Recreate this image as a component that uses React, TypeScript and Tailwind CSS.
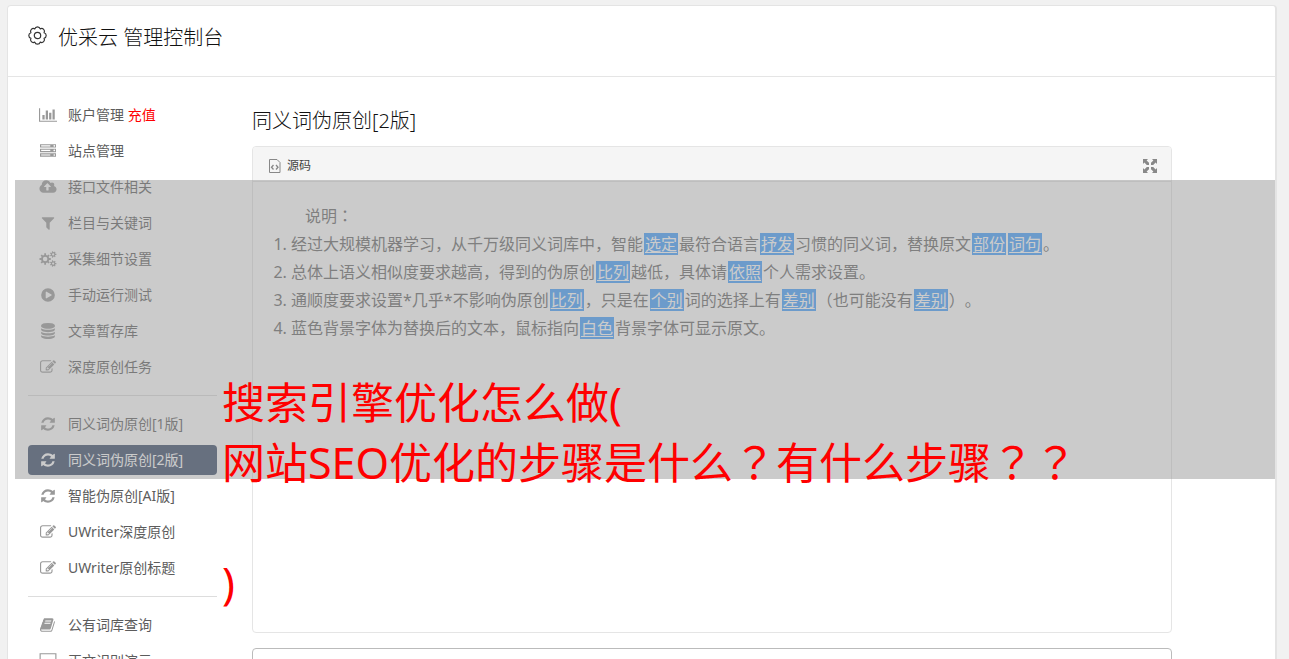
import type { ReactNode } from "react";

function gear(cx: number, cy: number, r: number, teeth: number, depth: number, hole: number): string {
  const step = (Math.PI * 2) / teeth;
  const pt = (radius: number, angle: number) =>
    `${(cx + radius * Math.cos(angle)).toFixed(1)} ${(cy + radius * Math.sin(angle)).toFixed(1)}`;
  let d = "";
  for (let i = 0; i < teeth; i++) {
    const a = i * step;
    d += `${i === 0 ? "M" : "L"}${pt(r - depth, a - step * 0.28)}L${pt(r, a - step * 0.2)}L${pt(r, a + step * 0.2)}L${pt(r - depth, a + step * 0.28)}`;
  }
  return `${d}ZM${cx - hole} ${cy}a${hole} ${hole} 0 1 0 ${hole * 2} 0a${hole} ${hole} 0 1 0 ${-hole * 2} 0Z`;
}

function scallop(cx: number, cy: number, r: number, bumps: number): string {
  const step = (Math.PI * 2) / bumps;
  const valley = r - 1.8;
  const pt = (radius: number, angle: number) =>
    `${(cx + radius * Math.cos(angle)).toFixed(2)} ${(cy + radius * Math.sin(angle)).toFixed(2)}`;
  let d = `M${pt(valley, -Math.PI / 2 - step / 2)}`;
  for (let i = 0; i < bumps; i++) {
    const a = -Math.PI / 2 + i * step;
    d += `C${pt(r + 0.7, a - step * 0.26)} ${pt(r + 0.7, a + step * 0.26)} ${pt(valley, a + step / 2)}`;
  }
  return `${d}Z`;
}

type Glyph = { box: string; width: number; d: string };

const glyphs: Record<string, Glyph> = {
  chart: {
    box: "0 0 2048 1792",
    width: 18,
    d: "M640 896v512h-256v-512h256zm384-512v1024h-256v-1024h256zm1024 1152v128h-2048v-1536h128v1408h1920zm-640-896v768h-256v-768h256zm384-384v1152h-256v-1152h256z",
  },
  server: {
    box: "0 0 1792 1792",
    width: 16,
    d: "M128 1408h1024v-128h-1024v128zm0-512h1024v-128h-1024v128zm1568 448q0-40-28-68t-68-28-68 28-28 68 28 68 68 28 68-28 28-68zm-1568-960h1024v-128h-1024v128zm1568 448q0-40-28-68t-68-28-68 28-28 68 28 68 68 28 68-28 28-68zm0-512q0-40-28-68t-68-28-68 28-28 68 28 68 68 28 68-28 28-68zm96 832v384h-1792v-384h1792zm0-512v384h-1792v-384h1792zm0-512v384h-1792v-384h1792z",
  },
  cloud: {
    box: "-64 0 1920 1792",
    width: 18,
    d: "M1216 864q0-14-9-23l-352-352q-9-9-23-9t-23 9l-351 351q-10 12-10 24 0 14 9 23t23 9h224v352q0 13 9.5 22.5t22.5 9.5h192q13 0 22.5-9.5t9.5-22.5v-352h224q13 0 22.5-9.5t9.5-22.5zm640 288q0 159-112.5 271.5t-271.5 112.5h-1088q-185 0-316.5-131.5t-131.5-316.5q0-130 70-240t188-165q-2-30-2-43 0-212 150-362t362-150q156 0 285.5 87t188.5 231q71-62 166-62 106 0 181 75t75 181q0 76-41 138 130 31 213.5 135.5t83.5 238.5z",
  },
  filter: {
    box: "0 0 1792 1792",
    width: 16,
    d: "M1595 295q17 41-14 70l-493 493v742q0 42-39 59-13 5-25 5-27 0-45-19l-256-256q-19-19-19-45v-486l-493-493q-31-29-14-70 17-39 59-39h1280q42 0 59 39z",
  },
  cogs: {
    box: "0 0 1920 1792",
    width: 18,
    d: gear(640, 896, 640, 8, 180, 250) + gear(1536, 384, 370, 7, 110, 125) + gear(1536, 1408, 370, 7, 110, 125),
  },
  play: {
    box: "0 0 1792 1792",
    width: 16,
    d: "M1312 896q0-37-32-55l-544-320q-31-19-64-1-32 19-32 56v640q0 37 32 56 16 8 32 8 17 0 32-9l544-320q32-18 32-55zM128 896a768 768 0 1 0 1536 0a768 768 0 1 0-1536 0z",
  },
  database: {
    box: "0 0 1792 1792",
    width: 16,
    d: "M896 768q237 0 443-43t325-127v170q0 69-103 128t-280 93.5-385 34.5-385-34.5-280-93.5-103-128v-170q119 84 325 127t443 43zm0 768q237 0 443-43t325-127v170q0 69-103 128t-280 93.5-385 34.5-385-34.5-280-93.5-103-128v-170q119 84 325 127t443 43zm0-384q237 0 443-43t325-127v170q0 69-103 128t-280 93.5-385 34.5-385-34.5-280-93.5-103-128v-170q119 84 325 127t443 43zm0-1152q208 0 385 34.5t280 93.5 103 128v128q0 69-103 128t-280 93.5-385 34.5-385-34.5-280-93.5-103-128v-128q0-69 103-128t280-93.5 385-34.5z",
  },
  edit: {
    box: "0 0 1792 1792",
    width: 16,
    d: "M888 1184l116-116-152-152-116 116v56h96v96h56zm440-720q-16-16-33 1l-350 350q-17 17-1 33t33-1l350-350q17-17 1-33zm80 594v190q0 119-84.5 203.5t-203.5 84.5h-832q-119 0-203.5-84.5t-84.5-203.5v-832q0-119 84.5-203.5t203.5-84.5h832q63 0 117 25 15 7 18 23 3 17-9 29l-49 49q-14 14-32 8-23-6-45-6h-832q-66 0-113 47t-47 113v832q0 66 47 113t113 47h832q66 0 113-47t47-113v-126q0-13 9-22l64-64q15-15 35-7t20 29zm-96-738l288 288-672 672h-288v-288zm444 132l-92 92-288-288 92-92q28-28 68-28t68 28l152 152q28 28 28 68t-28 68z",
  },
  refresh: {
    box: "0 0 1792 1792",
    width: 16,
    d: "M1639 1056q0 5-1 7-64 268-268 434.5t-478 166.5q-146 0-282.5-55t-243.5-157l-129 129q-19 19-45 19t-45-19-19-45v-448q0-26 19-45t45-19h448q26 0 45 19t19 45-19 45l-137 137q71 66 161 102t187 36q134 0 250-65t186-179q11-17 53-117 8-23 30-23h192q13 0 22.5 9.5t9.5 22.5zm25-800v448q0 26-19 45t-45 19h-448q-26 0-45-19t-19-45 19-45l138-138q-148-137-349-137-134 0-250 65t-186 179q-11 17-53 117-8 23-30 23h-199q-13 0-22.5-9.5t-9.5-22.5v-7q65-268 270-434.5t480-166.5q146 0 284 55.5t245 156.5l130-129q19-19 45-19t45 19 19 45z",
  },
  book: {
    box: "0 0 1792 1792",
    width: 16,
    d: "M1639 478q40 57 18 129l-275 906q-19 64-76.5 107.5t-122.5 43.5h-923q-77 0-148.5-53.5t-99.5-131.5q-24-67-2-127 0-4 3-27t4-37q1-8-3-21.5t-3-19.5q2-11 8-21t16.5-23.5 16.5-23.5q23-38 45-91.5t30-91.5q3-10 .5-30t-.5-28q3-11 17-28t17-23q21-36 42-92t25-90q1-9-2.5-32t.5-28q4-13 22-30.5t22-22.5q19-26 42.5-84.5t27.5-96.5q1-8-3-25.5t-2-26.5q2-8 9-18t18-23 17-21q8-12 16.5-30.5t15-35 16-36 19.5-32 26.5-23.5 36-11.5 47.5 5.5l-1 3q38-9 51-9h761q74 0 114 56t18 130l-274 906q-36 119-71.5 153.5t-128.5 34.5h-869q-27 0-38 15-11 16-1 43 24 70 144 70h923q29 0 56-15.5t35-41.5l300-987q7-22 5-57 38 15 59 43zm-1064 2q-4 13 2 22.5t20 9.5h608q13 0 25.5-9.5t16.5-22.5l21-64q4-13-2-22.5t-20-9.5h-608q-13 0-25.5 9.5t-16.5 22.5zm-83 256q-4 13 2 22.5t20 9.5h608q13 0 25.5-9.5t16.5-22.5l21-64q4-13-2-22.5t-20-9.5h-608q-13 0-25.5 9.5t-16.5 22.5z",
  },
  laptop: {
    box: "0 0 2048 1792",
    width: 18,
    d: "M64 0h1920v1280h-1920zM192 128v1024h1664v-1024zM0 1408h2048v128h-2048z",
  },
};

function Icon({ name }: { name: string }) {
  const g = glyphs[name];
  return (
    <svg width={g.width} height={16} viewBox={g.box} fill="currentColor" fillRule="evenodd" aria-hidden="true">
      <path d={g.d} />
    </svg>
  );
}

type Item = { icon: string; label: string; extra?: string; active?: boolean };

const groups: Item[][] = [
  [
    { icon: "chart", label: "账户管理", extra: "充值" },
    { icon: "server", label: "站点管理" },
    { icon: "cloud", label: "接口文件相关" },
    { icon: "filter", label: "栏目与关键词" },
    { icon: "cogs", label: "采集细节设置" },
    { icon: "play", label: "手动运行测试" },
    { icon: "database", label: "文章暂存库" },
    { icon: "edit", label: "深度原创任务" },
  ],
  [
    { icon: "refresh", label: "同义词伪原创[1版]" },
    { icon: "refresh", label: "同义词伪原创[2版]", active: true },
    { icon: "refresh", label: "智能伪原创[AI版]" },
    { icon: "edit", label: "UWriter深度原创" },
    { icon: "edit", label: "UWriter原创标题" },
  ],
  [
    { icon: "book", label: "公有词库查询" },
    { icon: "laptop", label: "正文识别演示" },
  ],
];

function MenuItem({ item }: { item: Item }) {
  return (
    <li>
      <a
        href="#"
        className={
          item.active
            ? "flex h-[30px] items-center rounded bg-[#374967] text-sm text-white"
            : "flex h-[30px] items-center rounded text-sm text-[#5c5c5c]"
        }
      >
        <span className={item.active ? "flex w-10 justify-center" : "flex w-10 justify-center text-[#999]"}>
          <Icon name={item.icon} />
        </span>
        <span>
          {item.label}
          {item.extra && <span className="text-[#f00]"> {item.extra}</span>}
        </span>
      </a>
    </li>
  );
}

function Swap({ children }: { children: ReactNode }) {
  return <span className="mx-px bg-[#409eff] px-px text-white underline underline-offset-2">{children}</span>;
}

function Centered({ children }: { children: ReactNode }) {
  return (
    <span lang="zh-TW" className="font-['Noto_Sans_CJK_TC',sans-serif] leading-none">
      {children}
    </span>
  );
}

export default function App() {
  return (
    <div
      lang="zh-CN"
      className="h-screen overflow-hidden bg-[#f1f1f1] pt-[5px] pr-3 pl-[7px] font-['Noto_Sans','Noto_Sans_CJK_SC',sans-serif] text-[#111] [text-spacing-trim:space-all]"
    >
      <div className="min-h-full rounded-t border border-r-2 border-[#e4e4e4] bg-white">
        <header className="flex h-[71px] items-start gap-2.5 border-b border-[#e5e5e5] pt-[17px] pl-5">
          <svg width="20" height="26" viewBox="0 0 20 26" fill="none" stroke="#333" strokeWidth="1.2" aria-hidden="true">
            <path d={scallop(9.5, 12.5, 8.9, 8)} strokeLinejoin="round" />
            <circle cx="9.5" cy="12.5" r="3.2" />
          </svg>
          <h1 className="text-xl leading-[30px] font-light">优采云 管理控制台</h1>
        </header>

        <div className="flex gap-[35px] pr-[103px] pl-5">
          <nav className="w-[189px] shrink-0 pt-[23px]">
            {groups.map((group, i) => (
              <ul
                key={i}
                className={i === 0 ? "flex flex-col gap-1.5" : "mt-[13px] flex flex-col gap-1.5 border-t border-[#ddd] pt-[13px]"}
              >
                {group.map((item) => (
                  <MenuItem key={item.label} item={item} />
                ))}
              </ul>
            ))}
          </nav>

          <main className="min-w-0 flex-1 pt-[29px]">
            <h2 className="text-xl leading-[30px] font-light">同义词伪原创[2版]</h2>
            <section className="mt-2.5 overflow-hidden rounded border border-[#e5e5e5]">
              <div className="flex h-[35px] items-center justify-between border-b border-[#e5e5e5] bg-[#f5f5f5] pt-[3px] pr-3.5 pl-[15px]">
                <button type="button" className="flex items-center gap-1.5 text-xs text-[#444]">
                  <svg width="13" height="14" viewBox="0 0 13 14" fill="none" stroke="#888" aria-hidden="true">
                    <path d="M1.5.5H9L12 3.5V13.5H1.5Z" />
                    <path d="M5.5 6L3.5 8.2L5.5 10.5M8 6L10 8.2L8 10.5" strokeWidth="1.3" />
                  </svg>
                  源码
                </button>
                <button type="button" aria-label="全屏">
                  <svg width="14" height="14" viewBox="0 0 14 14" fill="#888" aria-hidden="true">
                    <path d="M0 0H5L3.6 1.4L6 3.8V6H3.8L1.4 3.6L0 5ZM14 0V5L12.6 3.6L10.2 6H8V3.8L10.4 1.4L9 0ZM0 14V9L1.4 10.4L3.8 8H6V10.2L3.6 12.6L5 14ZM14 14H9L10.4 12.6L8 10.2V8H10.2L12.6 10.4L14 9Z" />
                  </svg>
                </button>
              </div>
              <div className="h-[450px] px-5 pt-5 text-base leading-7 text-[#666]">
                <p className="pl-8">
                  说明<Centered>：</Centered>
                </p>
                <ol className="list-decimal pl-[18px]">
                  <li>
                    经过大规模机器学习，从千万级同义词库中，智能<Swap>选定</Swap>最符合语言<Swap>抒发</Swap>
                    习惯的同义词，替换原文<Swap>部份</Swap>
                    <Swap>词句</Swap>。
                  </li>
                  <li>
                    总体上语义相似度要求越高，得到的伪原创<Swap>比列</Swap>越低，具体请<Swap>依照</Swap>个人需求设置。
                  </li>
                  <li>
                    通顺度要求设置*几乎*不影响伪原创<Swap>比列</Swap>，只是在<Swap>个别</Swap>词的选择上有
                    <Swap>差别</Swap>（也可能没有<Swap>差别</Swap>）。
                  </li>
                  <li>
                    蓝色背景字体为替换后的文本，鼠标指向<Swap>白色</Swap>背景字体可显示原文。
                  </li>
                </ol>
              </div>
            </section>
            <textarea
              aria-label="文本"
              className="mt-[15px] block h-40 w-full resize-none rounded border border-[#bbb] bg-white p-3 text-sm"
            />
          </main>
        </div>
      </div>

      <div className="absolute top-[180px] right-3.5 left-[15px] h-[299px] bg-[#979797]/50" />
      <p className="absolute top-[373px] left-[222px] text-[43px] leading-[60px] whitespace-nowrap text-[#f00]">
        搜索引擎优化怎么做(
        <br />
        网站SEO优化的步骤是什么<Centered>？</Centered>有什么步骤<Centered>？？</Centered>
        <br />
        <br />)
      </p>
    </div>
  );
}
